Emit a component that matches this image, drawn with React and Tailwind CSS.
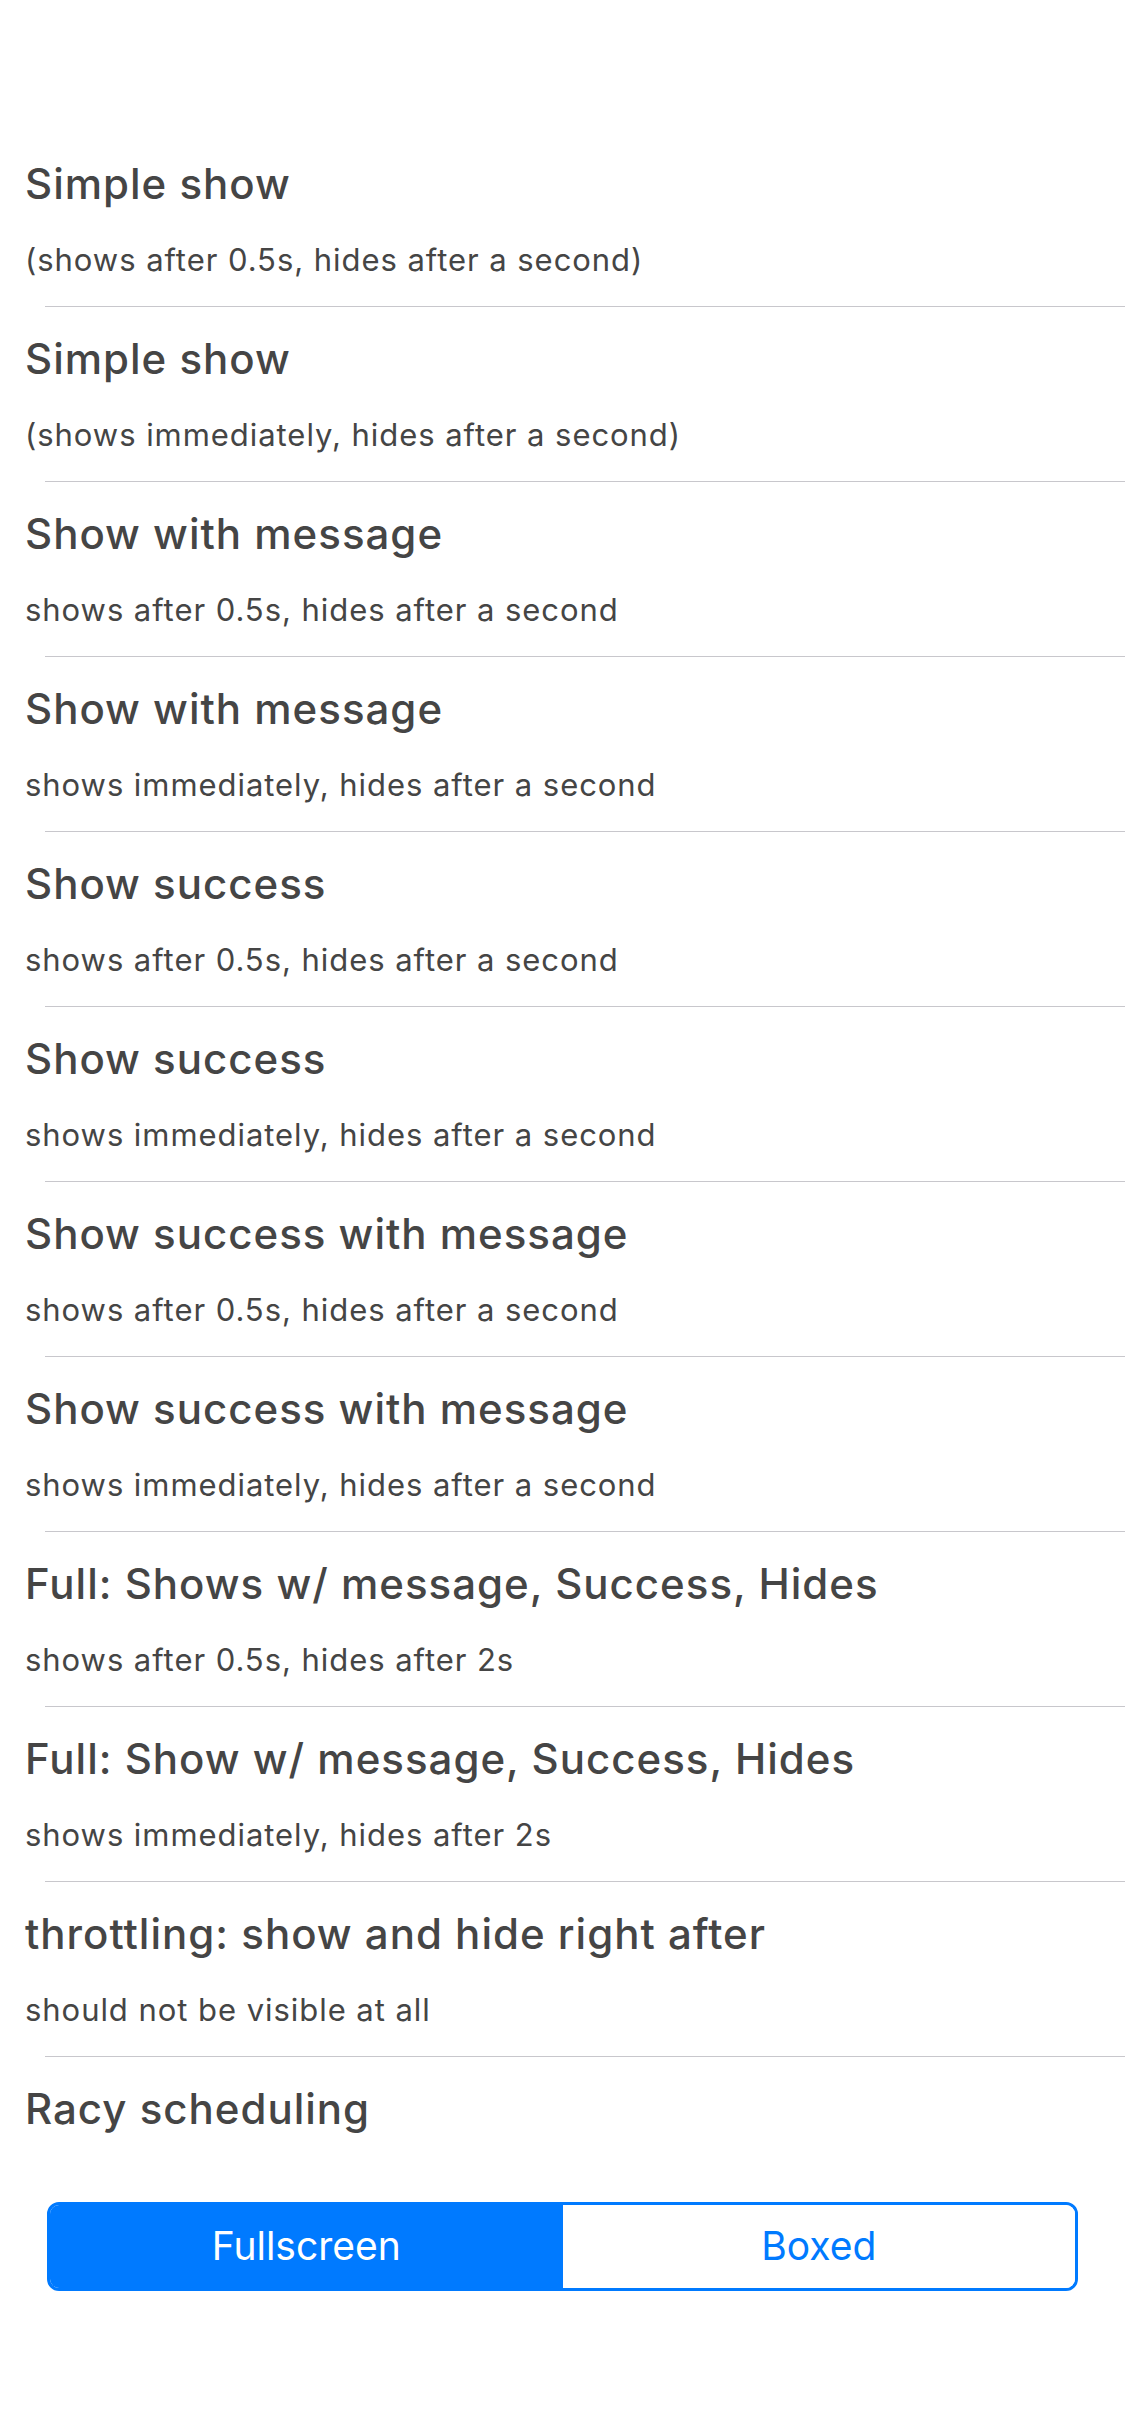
import React from "react";

const rows = [
  ["Simple show", "(shows after 0.5s, hides after a second)"],
  ["Simple show", "(shows immediately, hides after a second)"],
  ["Show with message", "shows after 0.5s, hides after a second"],
  ["Show with message", "shows immediately, hides after a second"],
  ["Show success", "shows after 0.5s, hides after a second"],
  ["Show success", "shows immediately, hides after a second"],
  ["Show success with message", "shows after 0.5s, hides after a second"],
  ["Show success with message", "shows immediately, hides after a second"],
  ["Full: Shows w/ message, Success, Hides", "shows after 0.5s, hides after 2s"],
  ["Full: Show w/ message, Success, Hides", "shows immediately, hides after 2s"],
  ["throttling: show and hide right after", "should not be visible at all"],
];

export default function App() {
  return (
    <div className="w-[1125px] h-[2436px] bg-white overflow-hidden" style={{ fontFamily: "Inter, 'Noto Sans', sans-serif" }}>
      <div className="pt-[132px]">
        {rows.map(([t, s], i) => (
          <div key={i} className="relative h-[175px] pl-[25px] pt-[27px]">
            <div className="text-[42px] leading-[50px] text-[#454545] font-medium tracking-[1px]">{t}</div>
            <div className="mt-[33px] text-[31px] leading-[36px] text-[#454545] tracking-[0.95px]">{s}</div>
            <div className="absolute left-[45px] right-0 bottom-0 h-px bg-[#c8c7cc]" />
          </div>
        ))}
        <div className="h-[145px] pl-[25px] pt-[27px]">
          <div className="text-[42px] leading-[50px] text-[#454545] font-medium tracking-[1px]">Racy scheduling</div>
        </div>
        <div className="mx-[47px] flex h-[89px] rounded-[12px] border-[3px] border-[#007aff] overflow-hidden">
          <div className="flex-1 bg-[#007aff] text-white flex items-center justify-center text-[39px]">Fullscreen</div>
          <div className="flex-1 bg-white text-[#007aff] flex items-center justify-center text-[39px]">Boxed</div>
        </div>
      </div>
    </div>
  );
}
